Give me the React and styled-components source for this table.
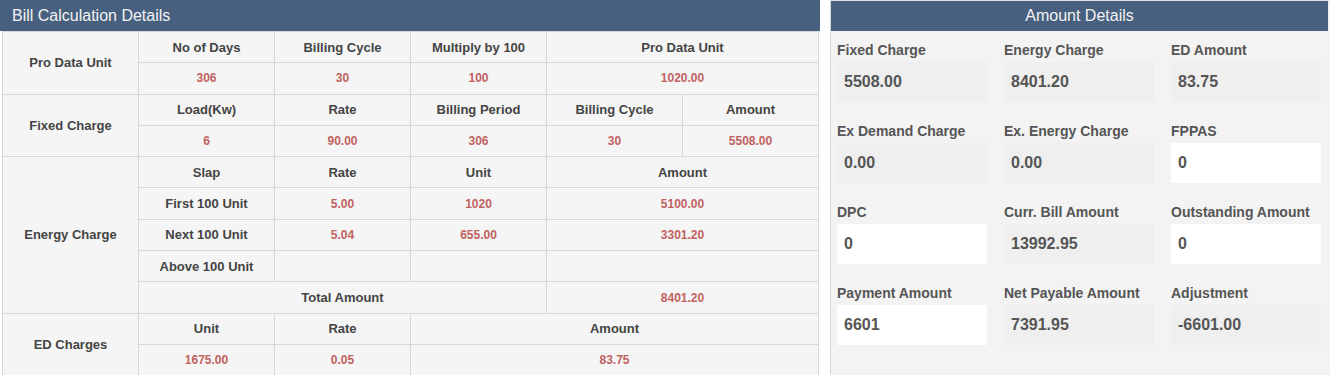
import React from 'react';
import styled, { createGlobalStyle } from 'styled-components';

const GlobalStyle = createGlobalStyle`
    body {
        margin: 0;
        background: #fff;
        font-family: "Liberation Sans", Arial, sans-serif;
    }
`;

const amountFields = [
    { label: 'Fixed Charge', value: '5508.00', editable: false },
    { label: 'Energy Charge', value: '8401.20', editable: false },
    { label: 'ED Amount', value: '83.75', editable: false },
    { label: 'Ex Demand Charge', value: '0.00', editable: false },
    { label: 'Ex. Energy Charge', value: '0.00', editable: false },
    { label: 'FPPAS', value: '0', editable: true },
    { label: 'DPC', value: '0', editable: true },
    { label: 'Curr. Bill Amount', value: '13992.95', editable: false },
    { label: 'Outstanding Amount', value: '0', editable: true },
    { label: 'Payment Amount', value: '6601', editable: true },
    { label: 'Net Payable Amount', value: '7391.95', editable: false },
    { label: 'Adjustment', value: '-6601.00', editable: false },
];

function App() {
    return (
        <Page>
            <GlobalStyle />
            <LeftPanel>
                <Heading>Bill Calculation Details</Heading>
                <Table>
                    <colgroup>
                        {[0, 1, 2, 3, 4, 5].map((i) => (
                            <col key={i} style={{ width: '136px' }} />
                        ))}
                    </colgroup>
                    <tbody>
                        <tr>
                            <Th rowSpan={2}>Pro Data Unit</Th>
                            <Th>No of Days</Th>
                            <Th>Billing Cycle</Th>
                            <Th>Multiply by 100</Th>
                            <Th colSpan={2}>Pro Data Unit</Th>
                        </tr>
                        <tr>
                            <Td>306</Td>
                            <Td>30</Td>
                            <Td>100</Td>
                            <Td colSpan={2}>1020.00</Td>
                        </tr>
                        <tr>
                            <Th rowSpan={2}>Fixed Charge</Th>
                            <Th>Load(Kw)</Th>
                            <Th>Rate</Th>
                            <Th>Billing Period</Th>
                            <Th>Billing Cycle</Th>
                            <Th>Amount</Th>
                        </tr>
                        <tr>
                            <Td>6</Td>
                            <Td>90.00</Td>
                            <Td>306</Td>
                            <Td>30</Td>
                            <Td>5508.00</Td>
                        </tr>
                        <tr>
                            <Th rowSpan={5}>Energy Charge</Th>
                            <Th>Slap</Th>
                            <Th>Rate</Th>
                            <Th>Unit</Th>
                            <Th colSpan={2}>Amount</Th>
                        </tr>
                        <tr>
                            <Th>First 100 Unit</Th>
                            <Td>5.00</Td>
                            <Td>1020</Td>
                            <Td colSpan={2}>5100.00</Td>
                        </tr>
                        <tr>
                            <Th>Next 100 Unit</Th>
                            <Td>5.04</Td>
                            <Td>655.00</Td>
                            <Td colSpan={2}>3301.20</Td>
                        </tr>
                        <tr>
                            <Th>Above 100 Unit</Th>
                            <Td></Td>
                            <Td></Td>
                            <Td colSpan={2}></Td>
                        </tr>
                        <tr>
                            <Th colSpan={3}>Total Amount</Th>
                            <Td colSpan={2}>8401.20</Td>
                        </tr>
                        <tr>
                            <Th rowSpan={2}>ED Charges</Th>
                            <Th>Unit</Th>
                            <Th>Rate</Th>
                            <Th colSpan={3}>Amount</Th>
                        </tr>
                        <tr>
                            <Td>1675.00</Td>
                            <Td>0.05</Td>
                            <Td colSpan={3}>83.75</Td>
                        </tr>
                    </tbody>
                </Table>
            </LeftPanel>

            <RightPanel>
                <Heading center>Amount Details</Heading>
                <FieldGrid>
                    {amountFields.map((f) => (
                        <Field key={f.label}>
                            <Label>{f.label}</Label>
                            <ValueBox editable={f.editable}>{f.value}</ValueBox>
                        </Field>
                    ))}
                </FieldGrid>
            </RightPanel>
        </Page>
    );
}

export default App;

const Page = styled.div`
    display: flex;
    align-items: flex-start;
    gap: 10px;
    width: 1330px;
    height: 375px;
    overflow: hidden;
`;

const LeftPanel = styled.div`
    width: 820px;
    flex-shrink: 0;
`;

const Heading = styled.div`
    background: #48607f;
    color: #f2f2f2;
    font-size: 16px;
    height: 31px;
    line-height: 31px;
    padding: 0 12px;
    text-align: ${(p) => (p.center ? 'center' : 'left')};
    box-sizing: border-box;
`;

const Table = styled.table`
    border-collapse: collapse;
    table-layout: fixed;
    width: 817px;
    margin-left: 2px;
    background: #f5f5f5;
`;

const Th = styled.td`
    border: 1px solid #d7d7d7;
    height: 30.3px;
    padding: 0;
    text-align: center;
    vertical-align: middle;
    font-size: 13px;
    font-weight: bold;
    color: #444;
`;

const Td = styled(Th)`
    font-size: 12px;
    color: #c0625f;
`;

const RightPanel = styled.div`
    flex: 1;
    height: 375px;
    background: #f3f3f3;
    border-left: 1px solid #d5d5d5;
    border-top: 1px solid #e2e2e2;
    box-sizing: border-box;
    padding-right: 2px;

    ${Heading} {
        height: 30px;
        line-height: 30px;
    }
`;

const FieldGrid = styled.div`
    display: grid;
    grid-template-columns: repeat(3, 150px);
    column-gap: 17px;
    row-gap: 20px;
    padding: 10px 0 0 6px;
`;

const Field = styled.div`
    display: flex;
    flex-direction: column;
`;

const Label = styled.div`
    font-size: 14px;
    font-weight: bold;
    color: #555;
    line-height: 18px;
    margin-bottom: 3px;
    white-space: nowrap;
`;

const ValueBox = styled.div`
    height: 40px;
    line-height: 40px;
    padding-left: 7px;
    font-size: 16px;
    font-weight: bold;
    color: #555;
    background: ${(p) => (p.editable ? '#ffffff' : '#efefef')};
    box-sizing: border-box;
`;
